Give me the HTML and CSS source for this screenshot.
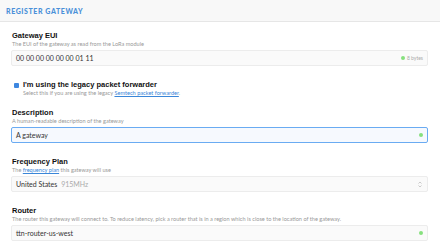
FILE: index.html
```html
<!DOCTYPE html>
<html lang="en">
<head>
    <meta charset="UTF-8">
    <title>Register Gateway</title>
    <link rel="stylesheet" href="styles.css">
</head>
<body>
    <div class="header">
        <h1>Register Gateway</h1>
    </div>

    <div class="content">
        <div class="field">
            <label for="eui">Gateway EUI</label>
            <p class="desc">The EUI of the gateway as read from the LoRa module</p>
            <div class="input">
                <span class="value">00 00 00 00 00 00 01 11</span>
                <span class="hint"><span class="ok"></span>8 bytes</span>
            </div>
        </div>

        <div class="check-field">
            <span class="checkbox"></span>
            <div>
                <div class="check-label">I'm using the legacy packet forwarder</div>
                <p class="desc">Select this if you are using the legacy <a href="#">Semtech packet forwarder</a>.</p>
            </div>
        </div>

        <div class="field">
            <label>Description</label>
            <p class="desc">A human-readable description of the gateway</p>
            <div class="input focus">
                <span class="value">A gateway</span>
                <span class="ok"></span>
            </div>
        </div>

        <div class="field">
            <label>Frequency Plan</label>
            <p class="desc">The <a href="#">frequency plan</a> this gateway will use</p>
            <div class="input">
                <span class="value">United States <span class="muted">915MHz</span></span>
                <svg class="arrows" width="4" height="7" viewBox="0 0 4 7">
                    <path d="M0.5 2.5 L2 1 L3.5 2.5 M0.5 4.5 L2 6 L3.5 4.5" fill="none" stroke="#aaa" stroke-width="0.6"/>
                </svg>
            </div>
        </div>

        <div class="field">
            <label>Router</label>
            <p class="desc">The router this gateway will connect to. To reduce latency, pick a router that is in a region which is close to the location of the gateway.</p>
            <div class="input">
                <span class="value">ttn-router-us-west</span>
                <span class="ok"></span>
            </div>
        </div>
    </div>
</body>
</html>
```

FILE: styles.css
```css
body {
    margin: 0;
    font-family: Lato, "Liberation Sans", sans-serif;
    background: white;
    color: #222;
}
.header {
    height: 21px;
    background-color: #f8f8f8;
    border-bottom: 1px solid #e6e6e6;
    display: flex;
    align-items: center;
    padding-left: 6px;
}
.header h1 {
    margin: 0;
    font-size: 7px;
    font-weight: 900;
    letter-spacing: 0.6px;
    text-transform: uppercase;
    color: #4a90d9;
}
.content {
    padding: 9px 12px 0 11px;
}
.field {
    margin-bottom: 14px;
}
label, .check-label {
    display: block;
    padding-left: 1px;
    font-family: "Liberation Sans", Arial, sans-serif;
    font-weight: bold;
    font-size: 7.5px;
    line-height: 9px;
    color: #111;
}
.desc {
    margin: 0;
    padding-left: 1px;
    font-size: 5.6px;
    line-height: 8px;
    color: #999;
}
.desc a {
    color: #3a86d8;
}
.input {
    margin-top: 2px;
    height: 14px;
    border: 1px solid #ececec;
    border-radius: 2px;
    background-color: #fafafa;
    display: flex;
    align-items: center;
    justify-content: space-between;
    padding: 0 4px;
    font-size: 7px;
    color: #333;
}
.input.focus {
    border-color: #6aabf2;
    background-color: #f6f9fe;
}
.muted {
    color: #aaa;
    margin-left: 2px;
}
.hint {
    display: flex;
    align-items: center;
    gap: 2px;
    font-size: 5px;
    color: #aaa;
}
.ok {
    width: 4px;
    height: 4px;
    border-radius: 50%;
    background-color: #86e07e;
}
.arrows {
    margin-right: 1px;
}
.check-field {
    display: flex;
    align-items: flex-start;
    gap: 4px;
    padding-left: 3px;
    margin-top: 15px;
    margin-bottom: 12px;
}
.check-label {
    padding-left: 0;
    line-height: 8px;
}
.check-field .desc {
    padding-left: 0;
    line-height: 7px;
}
.checkbox {
    width: 5px;
    height: 5px;
    margin-top: 2px;
    border-radius: 1px;
    background-color: #3d87e0;
}
```
